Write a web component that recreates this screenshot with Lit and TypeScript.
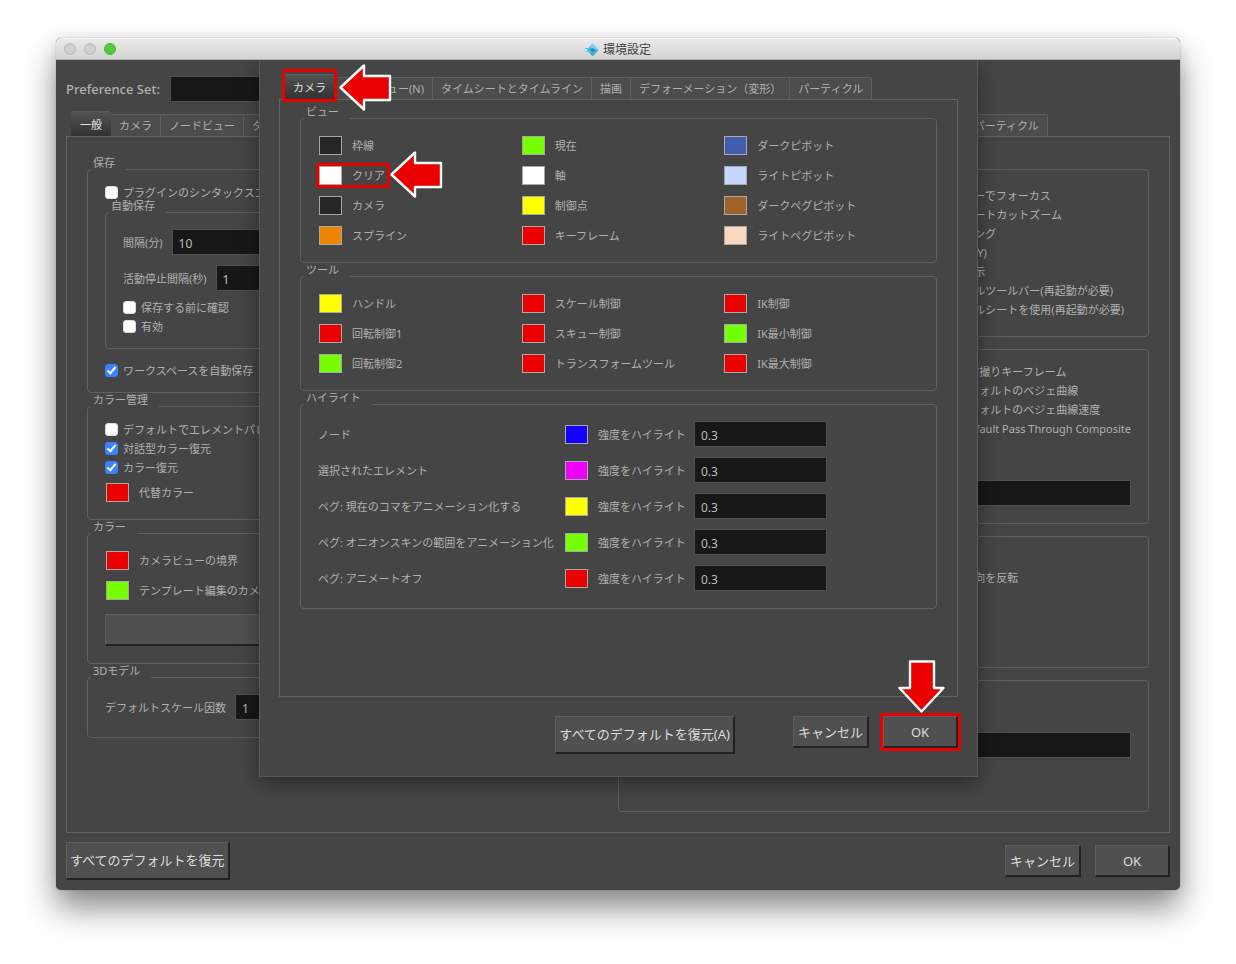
import { LitElement, html, css, svg, nothing } from "lit";
import { customElement } from "lit/decorators.js";
import { classMap } from "lit/directives/class-map.js";

type Swatch = { label: string; color: string; marked?: boolean };

const VIEW_COLORS: Swatch[] = [
  { label: "枠線", color: "#262626" },
  { label: "現在", color: "#76ff00" },
  { label: "ダークピボット", color: "#415eb0" },
  { label: "クリア", color: "#ffffff", marked: true },
  { label: "軸", color: "#ffffff" },
  { label: "ライトピボット", color: "#c6d7ff" },
  { label: "カメラ", color: "#262626" },
  { label: "制御点", color: "#ffff00" },
  { label: "ダークペグピボット", color: "#a1612b" },
  { label: "スプライン", color: "#ee8500" },
  { label: "キーフレーム", color: "#eb0000" },
  { label: "ライトペグピボット", color: "#fad9c0" },
];

const TOOL_COLORS: Swatch[] = [
  { label: "ハンドル", color: "#ffff00" },
  { label: "スケール制御", color: "#eb0000" },
  { label: "IK制御", color: "#eb0000" },
  { label: "回転制御1", color: "#eb0000" },
  { label: "スキュー制御", color: "#eb0000" },
  { label: "IK最小制御", color: "#76ff00" },
  { label: "回転制御2", color: "#76ff00" },
  { label: "トランスフォームツール", color: "#eb0000" },
  { label: "IK最大制御", color: "#eb0000" },
];

const HIGHLIGHTS: Swatch[] = [
  { label: "ノード", color: "#1400ff" },
  { label: "選択されたエレメント", color: "#ee00ff" },
  { label: "ペグ: 現在のコマをアニメーション化する", color: "#ffff00" },
  { label: "ペグ: オニオンスキンの範囲をアニメーション化", color: "#76ff00" },
  { label: "ペグ: アニメートオフ", color: "#eb0000" },
];

const MAIN_TABS = [
  "一般",
  "カメラ",
  "ノードビュー",
  "タイムシートとタイムライン",
  "描画",
  "デフォーメーション（変形）",
  "カラーマネージメント",
  "ネットワークレンダー",
  "サウンドビデオ(M)",
  "パーティクル",
];

const DIALOG_TABS = [
  "カメラ",
  "ノードビュー(N)",
  "タイムシートとタイムライン",
  "描画",
  "デフォーメーション（変形）",
  "パーティクル",
];

const arrowLeft = svg`<path d="M1.5 23.5 L25 1.5 V12 H51 V36 H25 V45.5 Z"
  fill="#eb0000" stroke="#fff" stroke-width="2.4" stroke-linejoin="round"/>`;
const arrowDown = svg`<path d="M23.5 51.5 L1.5 28 H12 V1.5 H36 V28 H45.5 Z"
  fill="#eb0000" stroke="#fff" stroke-width="2.4" stroke-linejoin="round"/>`;

@customElement("app-root")
export class AppRoot extends LitElement {
  static styles = css`
    :host {
      display: block;
      background: #fff;
      overflow: hidden;
      color: #b0b0b0;
      font: 11px/19px "Noto Sans", "Noto Sans CJK JP", sans-serif;
    }
    *,
    *::before,
    *::after {
      box-sizing: border-box;
    }
    button,
    input {
      font: inherit;
      color: inherit;
      margin: 0;
      padding: 0;
      border: 0;
      border-radius: 0;
    }
    .window {
      position: relative;
      margin: 38px 56px 74px;
      border-radius: 5px;
      background: #454545;
      box-shadow: 0 0 1px rgba(0, 0, 0, 0.5), 0 18px 32px rgba(0, 0, 0, 0.46),
        0 0 14px rgba(0, 0, 0, 0.08);
      white-space: nowrap;
    }
    .titlebar {
      display: grid;
      grid-template-columns: 1fr auto 1fr;
      align-items: center;
      height: 22px;
      padding: 0 8px;
      border-radius: 5px 5px 0 0;
      border-top: 1px solid #f6f6f6;
      border-bottom: 1px solid #b0b0b0;
      background: linear-gradient(#ebebeb, #d3d3d3);
      color: #444;
    }
    .lights {
      display: flex;
      gap: 8px;
    }
    .light {
      width: 12px;
      height: 12px;
      border-radius: 50%;
      border: 1px solid #bababa;
      background: #d0d0d0;
    }
    .light.zoom {
      background: #55c83c;
      border-color: #4cb635;
    }
    .title {
      display: flex;
      align-items: center;
      gap: 4px;
      margin: 0;
      padding-top: 1px;
      font-size: 12px;
      font-weight: 400;
      line-height: 19px;
    }
    .main {
      padding: 16px 10px 10px;
    }
    .set {
      display: flex;
      align-items: center;
      gap: 10px;
      font-size: 13px;
      margin-bottom: 9px;
    }
    .set label {
      font-weight: 500;
    }
    .set input {
      width: 300px;
    }
    .tabs {
      display: flex;
      align-items: flex-end;
      height: 25px;
      padding-left: 5px;
    }
    .tab {
      position: relative;
      height: 22px;
      padding: 0 8px;
      line-height: 21px;
      background: #4c4c4c;
      border: solid #5e5e5e;
      border-width: 1px 1px 0 0;
    }
    .tab:last-child {
      border-top-right-radius: 2px;
    }
    .tab.active {
      height: 25px;
      padding: 0 9px;
      color: #e0e0e0;
      background: linear-gradient(#525252, #323232);
      border-width: 1px 0 0 0;
      border-radius: 2px 2px 0 0;
    }
    .tab.marked {
      z-index: 1;
    }
    .pane {
      border: 1px solid #646464;
    }
    .main .pane {
      display: grid;
      grid-template-columns: minmax(0, 24fr) minmax(0, 25fr);
      align-items: start;
      gap: 22px;
      padding: 19px 20px 20px;
    }
    .group {
      min-width: 0;
      margin: 0;
      padding: 0 17px 17px;
      border: 1px solid #606060;
      border-radius: 4px;
    }
    .group > legend {
      height: 26px;
      margin-left: -14px;
      padding: 0 11px 0 2px;
      line-height: 14px;
    }
    .group.tight {
      margin-top: -1px;
    }
    .group.short {
      padding-bottom: 12px;
    }
    .group.lower {
      padding-top: 1px;
    }
    .group.long {
      padding-bottom: 23px;
    }
    .group.nested {
      margin: -3px 0 12px;
    }
    .check {
      display: flex;
      align-items: center;
      gap: 5px;
      height: 19px;
    }
    .check input {
      appearance: none;
      position: relative;
      width: 13px;
      height: 13px;
      border-radius: 3px;
      background: #fff;
      border: 1px solid #ddd;
    }
    .check input:checked {
      background: #3b82f7;
      border-color: #3b82f7;
    }
    .check input:checked::after {
      content: "";
      position: absolute;
      left: 3px;
      top: 0;
      width: 5px;
      height: 9px;
      border: solid #fff;
      border-width: 0 2px 2px 0;
      transform: rotate(40deg);
    }
    .far {
      padding-left: 309px;
    }
    .far.more {
      padding-left: 314px;
    }
    .field {
      display: flex;
      align-items: center;
      gap: 9px;
    }
    .fields {
      display: grid;
      gap: 10px;
      padding-top: 4px;
    }
    .text {
      width: 100%;
      height: 26px;
      min-width: 0;
      padding: 2px 6px 0;
      border: 1px solid #505050;
      background: #171717;
      color: #bdbdbd;
      font-size: 12px;
    }
    .checks {
      margin-top: 7px;
    }
    .space {
      padding-top: 42px;
    }
    .low {
      padding: 39px 0 36px;
    }
    .lead {
      padding-top: 4px;
    }
    .swatches {
      display: grid;
      gap: 11px 8px;
      justify-items: start;
      padding: 5px 0 0 1px;
    }
    .swatches.three {
      grid-template-columns: repeat(3, minmax(0, 1fr));
    }
    .swatches.after {
      padding-top: 6px;
    }
    .swatch {
      position: relative;
      display: flex;
      align-items: center;
      gap: 10px;
      height: 19px;
    }
    .chip {
      appearance: none;
      display: block;
      flex: none;
      width: 23px;
      height: 19px;
      border: 1px solid #a8a8a8;
      background: none;
    }
    .chip::-webkit-color-swatch-wrapper {
      padding: 0;
    }
    .chip::-webkit-color-swatch {
      border: 0;
      border-radius: 0;
    }
    .marked::after {
      content: "";
      position: absolute;
      inset: -3px -5px -3px -3px;
      border: 3px solid #eb0000;
      border-radius: 3px;
      pointer-events: none;
    }
    .tab.marked::after {
      inset: -6px -2px -3px -2px;
    }
    .btn {
      position: relative;
      height: 32px;
      min-width: 75px;
      padding: 2px 4px 0;
      border: solid;
      border-width: 1px 2px 2px 1px;
      border-color: #5e5e5e #232323 #232323 #5e5e5e;
      background: #505050;
      color: #dcdcdc;
      font-size: 13px;
    }
    .btn.tall {
      height: 38px;
      padding: 0 3px;
    }
    .btn.wide {
      display: block;
      width: 100%;
      margin-top: 14px;
    }
    .btn.marked::after {
      inset: -4px -5px -5px -4px;
    }
    .footer {
      display: flex;
      align-items: center;
      gap: 14px;
      margin-top: 9px;
    }
    .footer .push {
      margin-right: auto;
    }
    .dialog {
      position: absolute;
      top: 22px;
      left: 203px;
      right: 202px;
      padding: 14px 19px 22px;
      border: 1px solid #585858;
      border-top: 0;
      background: #454545;
      box-shadow: 0 6px 20px rgba(0, 0, 0, 0.4);
      clip-path: inset(0 -40px -40px -40px);
    }
    .dialog .pane {
      padding: 5px 20px 87px;
    }
    .dialog .footer {
      justify-content: flex-end;
      align-items: flex-start;
      margin-top: 19px;
    }
    .dialog .footer .tall {
      margin-right: 44px;
    }
    .highlights {
      display: grid;
      gap: 10px;
      padding-top: 4px;
    }
    .highlight {
      display: grid;
      grid-template-columns: 237px 23px 86px 133px;
      align-items: center;
      gap: 10px;
    }
    .arrow {
      position: absolute;
      z-index: 1;
      display: block;
      pointer-events: none;
    }
    .arrow.by-tab {
      left: 55px;
      top: -11px;
    }
    .arrow.by-swatch {
      left: 71px;
      top: -15px;
    }
    .arrow.by-button {
      left: 14px;
      bottom: 33px;
    }
  `;

  private arrow(kind: "by-tab" | "by-swatch" | "by-button") {
    const down = kind === "by-button";
    return html`<svg
      class="arrow ${kind}"
      width=${down ? 47 : 53}
      height=${down ? 53 : 47}
      aria-hidden="true"
    >
      ${down ? arrowDown : arrowLeft}
    </svg>`;
  }

  private tabs(names: string[], marked = false) {
    return html`<div class="tabs" role="tablist">
      ${names.map(
        (name, i) => html`<button
          role="tab"
          aria-selected=${i === 0 ? "true" : "false"}
          class=${classMap({ tab: true, active: i === 0, marked: marked && i === 0 })}
        >
          ${name}${marked && i === 0 ? this.arrow("by-tab") : nothing}
        </button>`
      )}
    </div>`;
  }

  private check(label: string, checked = false) {
    return html`<label class="check"
      ><input type="checkbox" .checked=${checked} />${label}</label
    >`;
  }

  private swatch(s: Swatch) {
    return html`<label class=${classMap({ swatch: true, marked: !!s.marked })}>
      <input class="chip" type="color" .value=${s.color} />${s.label}
      ${s.marked ? this.arrow("by-swatch") : nothing}
    </label>`;
  }

  private field(label: string, value: string) {
    return html`<label class="field">${label}<input class="text" .value=${value} /></label>`;
  }

  private leftColumn() {
    return html`<div class="column">
      <fieldset class="group short lower">
        <legend>保存</legend>
        ${this.check("プラグインのシンタックスエラーを表示")}
        <fieldset class="group short nested">
          <legend>自動保存</legend>
          <div class="fields">
            ${this.field("間隔(分)", "10")} ${this.field("活動停止間隔(秒)", "1")}
          </div>
          <div class="checks">
            ${this.check("保存する前に確認")} ${this.check("有効")}
          </div>
        </fieldset>
        ${this.check("ワークスペースを自動保存", true)}
      </fieldset>
      <fieldset class="group lower">
        <legend>カラー管理</legend>
        ${this.check("デフォルトでエレメントパレットを使用")}
        ${this.check("対話型カラー復元", true)} ${this.check("カラー復元", true)}
        <div class="swatches after">
          ${this.swatch({ label: "代替カラー", color: "#eb0000" })}
        </div>
      </fieldset>
      <fieldset class="group">
        <legend>カラー</legend>
        <div class="swatches">
          ${this.swatch({ label: "カメラビューの境界", color: "#eb0000" })}
          ${this.swatch({ label: "テンプレート編集のカメラビュー", color: "#76ff00" })}
        </div>
        <button class="btn wide" aria-label="カラー"></button>
      </fieldset>
      <fieldset class="group">
        <legend>3Dモデル</legend>
        <div class="fields">${this.field("デフォルトスケール因数", "1")}</div>
      </fieldset>
    </div>`;
  }

  private rightColumn() {
    return html`<div class="column">
      <fieldset class="group" aria-label="オプション">
        <legend></legend>
        <div class="far lead">
          ${[
            "ザーでフォーカス",
            "ョートカットズーム",
            "ミング",
            "(X/Y)",
            "表示",
            "ールツールバー(再起動が必要)",
            "イルシートを使用(再起動が必要)",
          ].map((t) => this.check(t))}
        </div>
      </fieldset>
      <fieldset class="group tight" aria-label="設定">
        <legend></legend>
        <div class="far more">
          ${[
            "マ撮りキーフレーム",
            "フォルトのベジェ曲線",
            "フォルトのベジェ曲線速度",
            "Default Pass Through Composite",
          ].map((t) => this.check(t))}
        </div>
        <div class="space"><input class="text" aria-label="設定" /></div>
      </fieldset>
      <fieldset class="group tight long" aria-label="タブレット">
        <legend></legend>
        ${this.check("有効")}
        <div class="far">${this.check("方向を反転")}</div>
        ${this.check("回転")} ${this.check("ズーム")} ${this.check("表示")}
      </fieldset>
      <fieldset class="group tight" aria-label="言語">
        <legend></legend>
        <div class="low"><input class="text" aria-label="言語" /></div>
      </fieldset>
    </div>`;
  }

  private dialog() {
    return html`<section class="dialog" role="dialog" aria-label="カメラ">
      ${this.tabs(DIALOG_TABS, true)}
      <div class="pane">
        <fieldset class="group">
          <legend>ビュー</legend>
          <div class="swatches three">${VIEW_COLORS.map((s) => this.swatch(s))}</div>
        </fieldset>
        <fieldset class="group">
          <legend>ツール</legend>
          <div class="swatches three">${TOOL_COLORS.map((s) => this.swatch(s))}</div>
        </fieldset>
        <fieldset class="group">
          <legend>ハイライト</legend>
          <div class="highlights">
            ${HIGHLIGHTS.map(
              (h, i) => html`<div class="highlight">
                <label for="color-${i}">${h.label}</label>
                <input class="chip" type="color" id="color-${i}" .value=${h.color} />
                <label for="level-${i}">強度をハイライト</label>
                <input class="text" id="level-${i}" .value=${"0.3"} />
              </div>`
            )}
          </div>
        </fieldset>
      </div>
      <div class="footer">
        <button class="btn tall">すべてのデフォルトを復元(A)</button>
        <button class="btn">キャンセル</button>
        <button class="btn marked">OK${this.arrow("by-button")}</button>
      </div>
    </section>`;
  }

  render() {
    return html`<main class="window">
      <header class="titlebar">
        <div class="lights">
          <span class="light"></span><span class="light"></span><span class="light zoom"></span>
        </div>
        <h1 class="title">
          <svg width="14" height="14" viewBox="0 0 14 14" aria-hidden="true">
            <path d="M2 7 L7.5 0.5 L13.5 7 L7.5 13.5 Z" fill="#35b4e0" />
            <path d="M4.5 4 L7.5 0.5 L13.5 7 L9 6 Z" fill="#7ad3ee" />
            <path d="M0 5.5 H5 M1 8.5 H6" stroke="#5fc6e8" stroke-width="1" />
            <path d="M5.5 7 L8 4.8 L10.5 7 L8 9.2 Z" fill="#2090c8" />
          </svg>
          環境設定
        </h1>
      </header>
      <div class="main">
        <div class="set">
          <label for="set">Preference Set:</label><input class="text" id="set" />
        </div>
        ${this.tabs(MAIN_TABS)}
        <div class="pane">${this.leftColumn()} ${this.rightColumn()}</div>
        <div class="footer">
          <button class="btn tall push">すべてのデフォルトを復元</button>
          <button class="btn">キャンセル</button>
          <button class="btn">OK</button>
        </div>
      </div>
      ${this.dialog()}
    </main>`;
  }
}
